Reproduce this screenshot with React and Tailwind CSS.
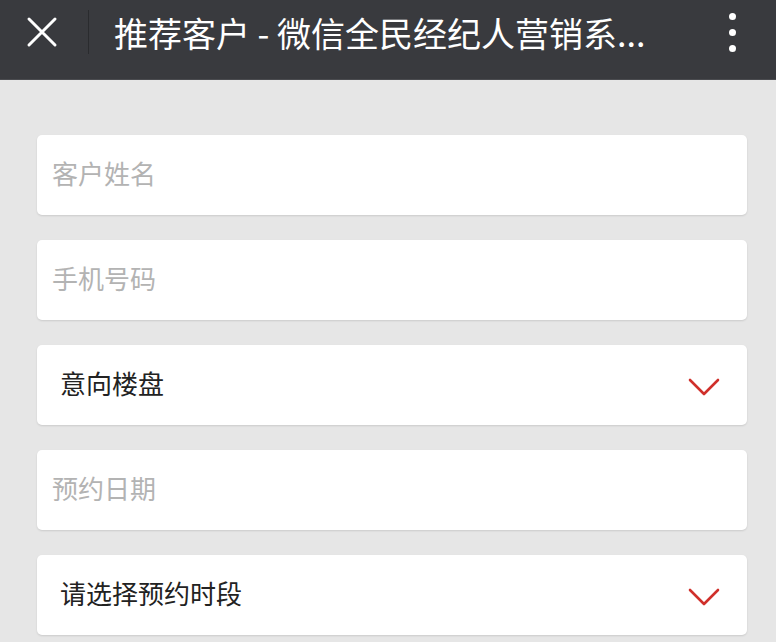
import React from 'react';

const fields = [
  { label: '客户姓名', type: 'input' },
  { label: '手机号码', type: 'input' },
  { label: '意向楼盘', type: 'select' },
  { label: '预约日期', type: 'input' },
  { label: '请选择预约时段', type: 'select' },
];

function Chevron() {
  return (
    <svg width="32" height="18" viewBox="0 0 32 18" className="shrink-0">
      <path d="M2 2 L16 16 L30 2" fill="none" stroke="#d0302b" strokeWidth="2.6" strokeLinecap="round" strokeLinejoin="round" />
    </svg>
  );
}

export default function App() {
  return (
    <div className="w-[776px] h-[642px] overflow-hidden bg-[#e6e6e6] font-['Noto_Sans_CJK_SC',sans-serif]">
      <div className="h-[80px] bg-[#393a3e] border-b border-[#4a4b4f] flex items-center">
        <div className="w-[88px] h-full flex items-center pl-[26px] -mt-[16px]">
          <svg width="32" height="32" viewBox="0 0 32 32">
            <path d="M3 3 L29 29 M29 3 L3 29" stroke="#ffffff" strokeWidth="3" strokeLinecap="round" />
          </svg>
        </div>
        <div className="w-px h-[44px] bg-[#2a2b2e] -mt-[16px]" />
        <div className="flex-1 pl-[25px] text-white text-[34px] leading-none -mt-[13px] whitespace-nowrap">
          推荐客户 - 微信全民经纪人营销系...
        </div>
        <div className="w-[88px] flex flex-col items-center gap-[9px] -mt-[14px]">
          <span className="w-[7px] h-[7px] rounded-full bg-white" />
          <span className="w-[7px] h-[7px] rounded-full bg-white" />
          <span className="w-[7px] h-[7px] rounded-full bg-white" />
        </div>
      </div>

      <div className="pt-[55px] pl-[37px] pr-[29px] flex flex-col gap-[25px]">
        {fields.map((f) => (
          <div
            key={f.label}
            className="h-[80px] bg-white rounded-[5px] shadow-[0_1px_2px_rgba(0,0,0,0.12)] flex items-center justify-between"
          >
            {f.type === 'input' ? (
              <span className="pl-[15px] text-[26px] text-[#b3b3b3] leading-none -mt-[4px]">{f.label}</span>
            ) : (
              <>
                <span className="pl-[23px] text-[26px] text-[#222222] leading-none -mt-[4px]">{f.label}</span>
                <span className="pr-[27px] pt-[4px]"><Chevron /></span>
              </>
            )}
          </div>
        ))}
      </div>
    </div>
  );
}
